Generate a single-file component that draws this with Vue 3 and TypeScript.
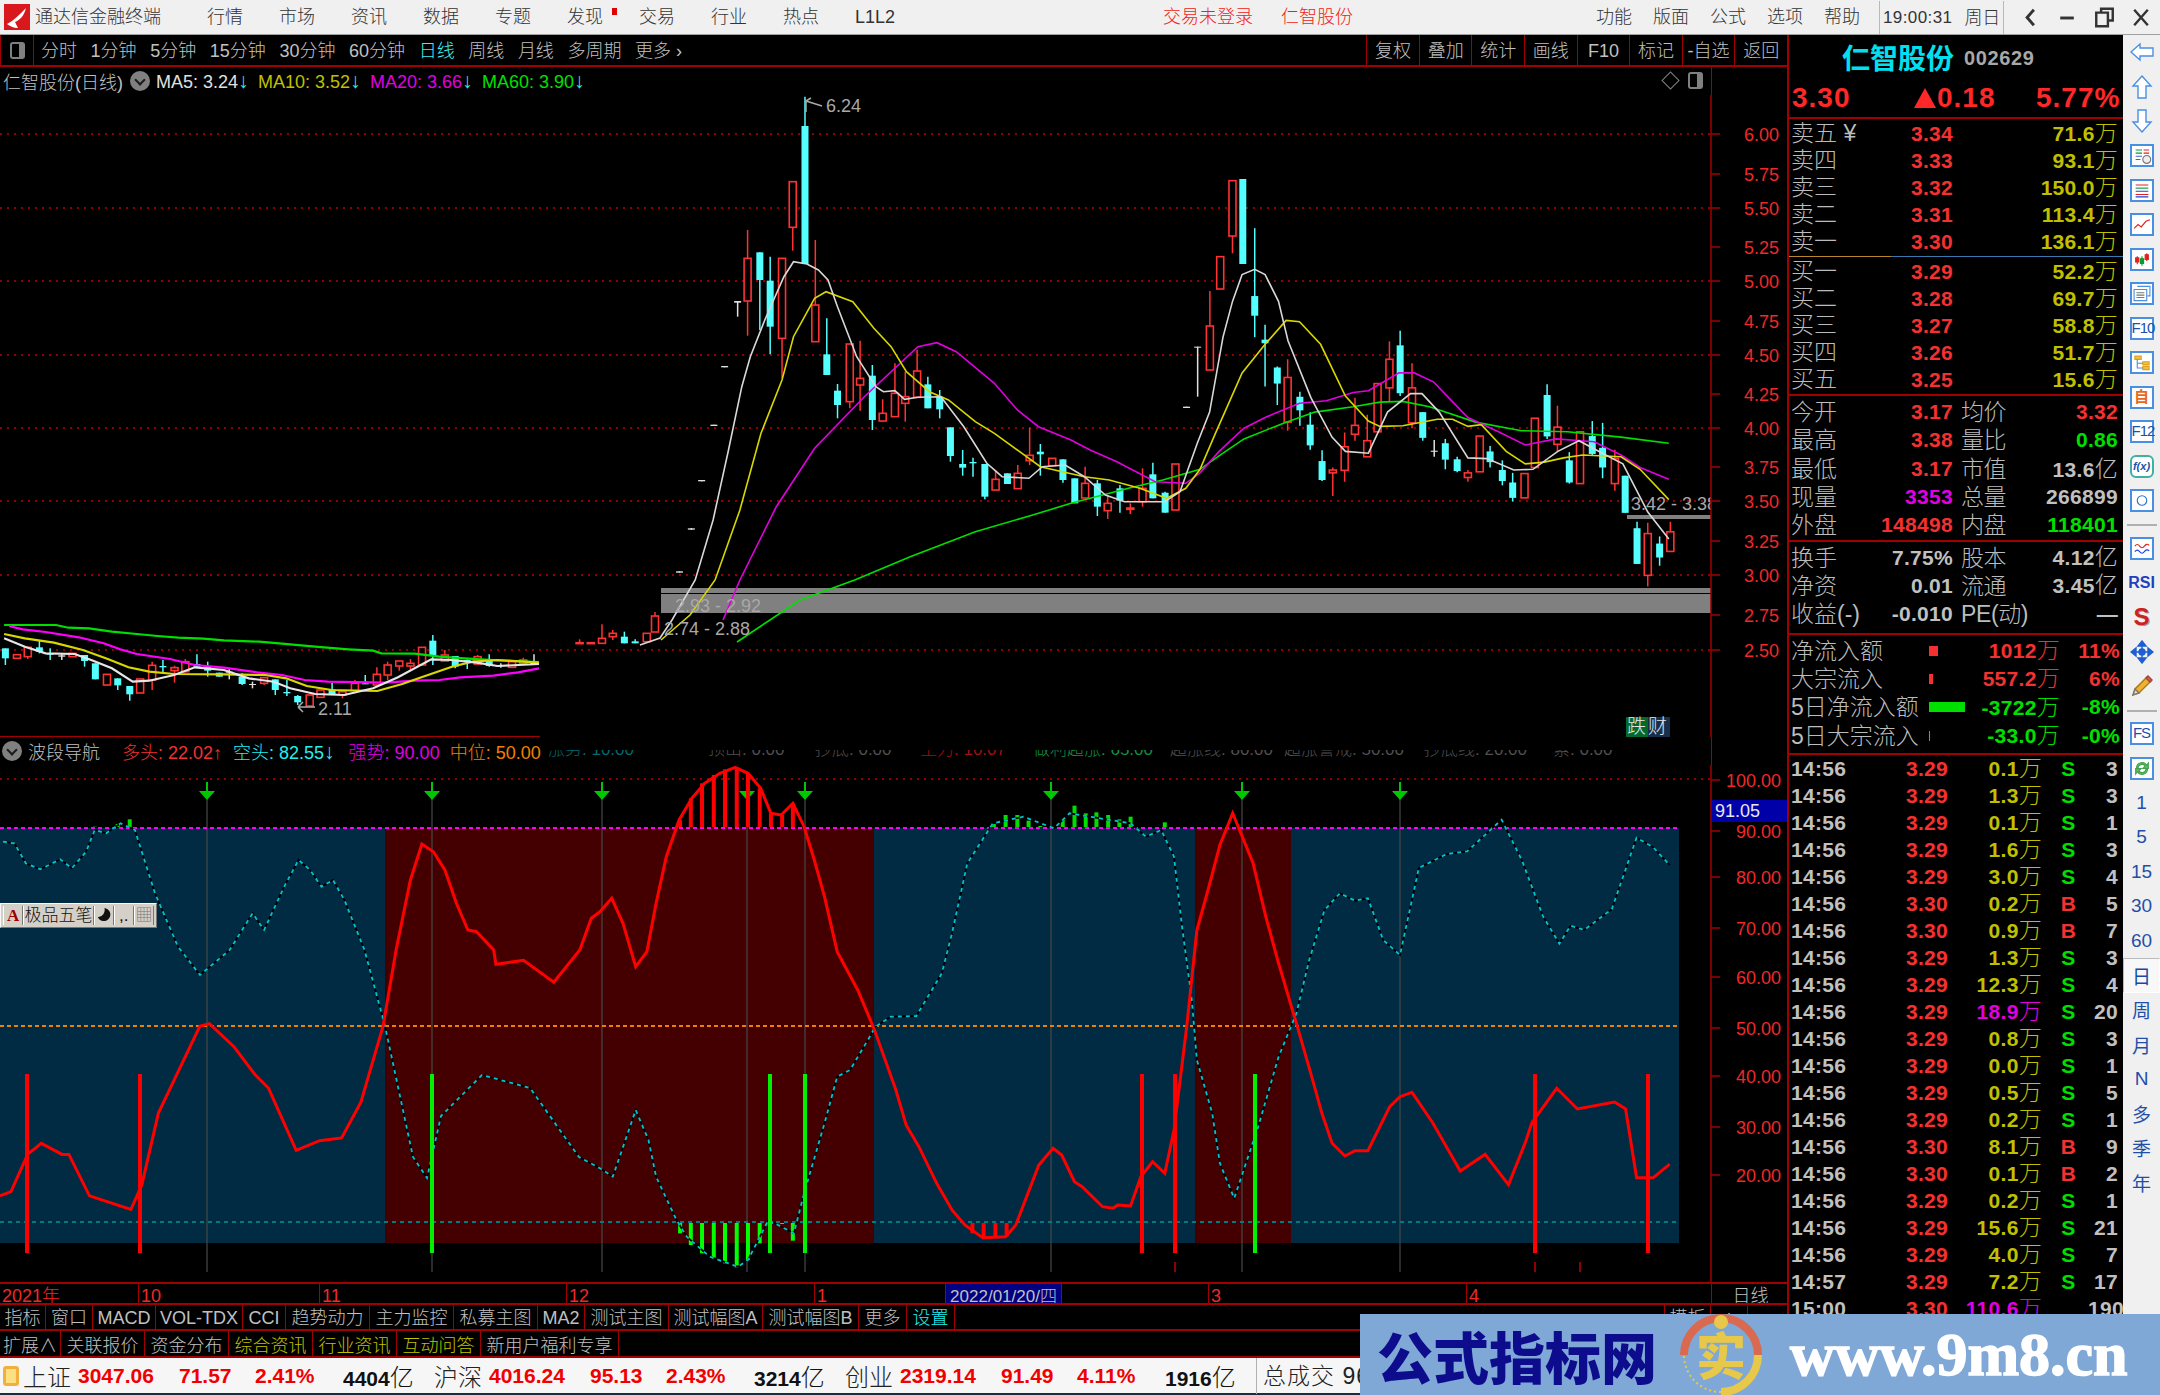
<template>
  <div class="app">
    <!-- title bar -->
    <header class="titlebar">
      <div class="title-left">
        <svg class="logo" viewBox="0 0 26 26">
          <rect width="26" height="26" fill="#d8181c" />
          <path d="M3 20 C9 17 13 13 22 4 C20 12 16 16 11 18 L14 24 C9 24 6 22 3 20 Z" fill="#fff" />
        </svg>
        <span class="brand">通达信金融终端</span>
        <nav class="menu">
          <span v-for="m in menus" :key="m" :class="{ flagged: m === '发现' }">{{ m }}</span>
        </nav>
      </div>
      <div class="title-center">
        <span>交易未登录</span>
        <span>仁智股份</span>
      </div>
      <div class="title-right">
        <span v-for="m in rightMenus" :key="m" class="rm">{{ m }}</span>
        <div class="clock">
          <span class="clock-time">19:00:31</span>
          <span class="clock-day">周日</span>
        </div>
        <div class="win-ctl">
          <svg viewBox="0 0 37 34">
            <path d="M22 9 L15 17 L22 25" fill="none" stroke="#333" stroke-width="3" />
          </svg>
          <svg viewBox="0 0 37 34"><rect x="11" y="16" width="14" height="3" fill="#333" /></svg>
          <svg viewBox="0 0 37 34">
            <path d="M15 12 V8 H27 V20 H23 M10 12 H22 V26 H10 Z" fill="none" stroke="#333" stroke-width="2.5" />
          </svg>
          <svg viewBox="0 0 37 34">
            <path d="M11 9 L25 25 M25 9 L11 25" fill="none" stroke="#333" stroke-width="2.5" />
          </svg>
        </div>
      </div>
    </header>

    <div class="main">
      <div class="left">
        <!-- period toolbar -->
        <div class="toolbar">
          <div class="tool-toggle"><i class="toggle"></i></div>
          <div class="periods">
            <span v-for="p in periods" :key="p" :class="{ on: p === '日线' }">{{ p }}</span>
          </div>
          <div class="tool-right">
            <span v-for="b in toolButtons" :key="b">{{ b }}</span>
          </div>
        </div>

        <!-- price panel -->
        <div class="legend">
          <div class="legend-main">
            <span class="stock">仁智股份(日线)</span>
            <i class="drop"></i>
            <span v-for="m in maLegend" :key="m.label" class="ma" :class="m.cls">
              {{ m.label }}<b class="down">↓</b>
            </span>
            <span class="legend-end">
              <i class="diamond"></i>
              <i class="toggle"></i>
            </span>
          </div>
        </div>
        <svg class="price-chart" viewBox="0 95 1787 642" width="1787" height="642">
          <defs>
            <clipPath id="plot"><rect x="0" y="95" width="1711" height="642" /></clipPath>
          </defs>
          <line v-for="y in priceGrid" :key="y" x1="0" :y1="y" x2="1711" :y2="y" class="grid" />
          <rect x="661" y="588" width="1050" height="5" fill="#808080" />
          <rect x="661" y="594" width="1050" height="19" fill="#808080" />
          <rect x="1627" y="515" width="84" height="4" fill="#808080" />
          <g v-for="(c, i) in candles" :key="i">
            <line :x1="c.x" :y1="c.wt" :x2="c.x" :y2="c.wb" :stroke="candleColor[c.kind]" stroke-width="1.5" />
            <rect
              :x="c.x - 3.5"
              :y="c.bt"
              width="7"
              :height="Math.max(c.bb - c.bt, 1)"
              :fill="c.kind === 0 ? '#000' : candleColor[c.kind]"
              :stroke="c.kind === 0 ? candleColor[0] : 'none'"
              :stroke-width="c.kind === 0 ? 1.6 : 0"
            />
          </g>
          <polyline v-for="l in maLines" :key="l.color + l.w" :points="l.pts" :stroke="l.color" :stroke-width="l.w" fill="none" />
          <g clip-path="url(#plot)" class="chart-note">
            <text x="1631" y="510">3.42 - 3.38</text>
            <text x="675" y="612">2.93 - 2.92</text>
            <text x="664" y="635">2.74 - 2.88</text>
          </g>
          <path d="M806 112 V101 M806 101 L822 106 M806 101 L811 98" stroke="#aaa" fill="none" stroke-width="1.5" />
          <text x="826" y="112" class="chart-note">6.24</text>
          <path d="M298 707 H315 M298 707 L303 702 M298 707 L303 712" stroke="#aaa" fill="none" stroke-width="1.5" />
          <text x="318" y="715" class="chart-note">2.11</text>
          <line x1="0" y1="737" x2="540" y2="737" stroke="#a00000" stroke-width="2" />
          <line x1="1711" y1="95" x2="1711" y2="737" class="axis" />
          <g v-for="t in priceTicks" :key="t.label">
            <line x1="1711" :y1="t.y" x2="1720" :y2="t.y" class="axis" />
            <text x="1779" :y="t.y + 7" class="axis-label">{{ t.label }}</text>
          </g>
          <rect x="1626" y="717" width="22" height="20" fill="#046a2c" />
          <rect x="1648" y="717" width="22" height="20" fill="#15304c" />
          <text x="1627" y="733" class="tag">跌财</text>
        </svg>

        <!-- indicator panel -->
        <div class="legend">
          <div class="legend-main">
            <i class="drop first"></i>
            <span class="stock">波段导航</span>
            <span class="ind red">多头: 22.02<b>↑</b></span>
            <span class="ind cyan">空头: 82.55<b class="down">↓</b></span>
            <span class="ind magenta">强势: 90.00</span>
            <span class="ind orange">中位: 50.00</span>
            <!-- these values are half cut by the panel edge in the terminal too -->
            <div class="ghosts">
              <span v-for="g in ghostItems" :key="g.t" :class="g.cls" :style="{ width: g.w + 'px' }">{{ g.t }}</span>
            </div>
          </div>
        </div>
        <div class="ind-wrap">
          <svg class="ind-chart" viewBox="0 765 1787 517" width="1787" height="517">
            <rect x="0" y="828" width="1679" height="415" fill="#002b42" />
            <rect x="385" y="828" width="489" height="415" fill="#440000" />
            <rect x="1195" y="828" width="96" height="415" fill="#440000" />
            <line x1="0" y1="779" x2="1711" y2="779" class="grid" />
            <line v-for="x in signalX" :key="x" :x1="x" y1="782" :x2="x" y2="1272" stroke="#484848" stroke-width="1.2" />
            <polygon v-for="x in signalX" :key="'a' + x" :points="`${x - 1},782 ${x + 1},782 ${x + 1},791 ${x + 8},791 ${x},800 ${x - 8},791 ${x - 1},791`" fill="#00c800" />
            <line x1="0" y1="828" x2="1679" y2="828" stroke="#ff00ff" stroke-width="2" stroke-dasharray="4 3" />
            <line x1="0" y1="1026" x2="1679" y2="1026" stroke="#f08000" stroke-width="2" stroke-dasharray="4 3" />
            <line x1="0" y1="1222" x2="1679" y2="1222" stroke="#007c80" stroke-width="2" stroke-dasharray="4 4" />
            <line v-for="b in topRed" :key="'tr' + b.x" :x1="b.x" :y1="b.y" :x2="b.x" y2="827" stroke="#ff0000" stroke-width="4" />
            <line v-for="b in topGreen" :key="'tg' + b.x" :x1="b.x" :y1="b.y" :x2="b.x" y2="827" stroke="#00e000" stroke-width="4" />
            <line v-for="b in lowGreen" :key="'lg' + b.x" :x1="b.x" y1="1223" :x2="b.x" :y2="b.y" stroke="#00ff00" stroke-width="4" />
            <line v-for="b in lowRed" :key="'lr' + b.x" :x1="b.x" y1="1223" :x2="b.x" :y2="b.y" stroke="#ff0000" stroke-width="4" />
            <polyline :points="cyanLine" fill="none" stroke="#000" stroke-width="1.8" />
            <polyline :points="cyanLine" fill="none" stroke="#00c4d0" stroke-width="1.8" stroke-dasharray="4 4" />
            <polyline :points="redLine" fill="none" stroke="#ff0000" stroke-width="3" />
            <line v-for="x in redSticks" :key="'rs' + x" :x1="x" y1="1074" :x2="x" y2="1253" stroke="#ff0000" stroke-width="4" />
            <line v-for="x in greenSticks" :key="'gs' + x" :x1="x" y1="1074" :x2="x" y2="1253" stroke="#00f000" stroke-width="4" />
            <line v-for="x in [1175, 1535, 1580]" :key="'t' + x" :x1="x" y1="1262" :x2="x" y2="1272" stroke="#c00000" stroke-width="1.5" />
            <line x1="1711" y1="765" x2="1711" y2="1282" class="axis" />
            <g v-for="t in indTicks" :key="t.label">
              <line x1="1711" :y1="t.y" x2="1720" :y2="t.y" class="axis" />
              <text x="1781" :y="t.y + 7" class="axis-label">{{ t.label }}</text>
            </g>
            <rect x="1712" y="800" width="75" height="22" fill="#0000a8" />
            <text x="1715" y="817" class="tag-value">91.05</text>
          </svg>
          <!-- input method bar floats over the chart -->
          <div class="ime">
            <span class="ime-key ime-a">A</span>
            <span class="ime-key ime-name">极品五笔</span>
            <span class="ime-key">
              <svg viewBox="0 0 16 18" width="15" height="17"><path d="M9 2 A7 7 0 1 1 2 12 A8 8 0 0 0 9 2 Z" fill="#111" /></svg>
            </span>
            <span class="ime-key">,.</span>
            <span class="ime-key ime-kb">▦</span>
          </div>
        </div>

        <!-- time axis -->
        <div class="time-axis">
          <span v-for="t in timeAxis" :key="t" :class="{ cursor: t.includes('/'), label: t === '日线' }">{{ t }}</span>
        </div>

        <div class="btn-row first">
          <span v-for="b in buttonsA" :key="b.k || b.t" :class="b.cls" :style="{ width: b.w + 'px' }">{{ b.t }}</span>
        </div>
        <div class="btn-row second">
          <span v-for="b in buttonsB" :key="b.t" :class="b.cls" :style="{ width: b.w + 'px' }">{{ b.t }}</span>
        </div>
      </div>

      <!-- quote panel -->
      <aside class="panel">
        <div class="name-row">
          <span class="name">仁智股份</span>
          <span class="code">002629</span>
        </div>
        <div class="price-row">
          <span>3.30</span>
          <span class="change"><b class="tri"></b>0.18</span>
          <span>5.77%</span>
        </div>
        <div class="book">
          <div v-for="r in sells" :key="r.l" class="book-row">
            <span class="lbl">{{ r.l }}</span>
            <span class="num px">{{ r.p }}</span>
            <span class="num vol">{{ r.v }}<em>万</em></span>
          </div>
        </div>
        <div class="book-split"></div>
        <div class="book">
          <div v-for="r in buys" :key="r.l" class="book-row">
            <span class="lbl">{{ r.l }}</span>
            <span class="num px">{{ r.p }}</span>
            <span class="num vol">{{ r.v }}<em>万</em></span>
          </div>
        </div>
        <div class="stats first">
          <div v-for="r in statsA" :key="r.a" class="stat-row">
            <span class="lbl">{{ r.a }}</span>
            <span class="num" :class="r.ac">{{ r.av }}</span>
            <span class="lbl">{{ r.b }}</span>
            <span class="num" :class="r.bc">{{ r.bv }}<em v-if="r.unit">{{ r.unit }}</em></span>
          </div>
        </div>
        <div class="stats second">
          <div v-for="r in statsB" :key="r.a" class="stat-row">
            <span class="lbl nowrap">{{ r.a }}</span>
            <span class="num gray">{{ r.av }}</span>
            <span class="lbl nowrap">{{ r.b }}</span>
            <span class="num gray">{{ r.bv }}<em v-if="r.unit">{{ r.unit }}</em></span>
          </div>
        </div>
        <div class="flows">
          <div v-for="f in flows" :key="f.l" class="flow-row" :class="f.cls">
            <span class="lbl nowrap">{{ f.l }}</span>
            <span class="flow-bar"><i :style="{ width: f.w + 'px' }"></i></span>
            <span class="num">{{ f.v }}<em>万</em></span>
            <span class="num">{{ f.p }}</span>
          </div>
        </div>
        <div class="ticks">
          <div v-for="(t, i) in ticks" :key="i" class="tick-row">
            <span class="num gray">{{ t[0] }}</span>
            <span class="num red">{{ t[1] }}</span>
            <span class="num" :class="t[5] ? 'magenta' : 'yellow'">{{ t[2] }}<em>万</em></span>
            <span class="num side" :class="t[3] === 'B' ? 'red' : 'green'">{{ t[3] }}</span>
            <span class="num gray">{{ t[4] }}</span>
          </div>
        </div>
      </aside>

      <!-- icon strip -->
      <aside class="sidebar">
        <template v-for="(s, i) in sideItems" :key="i">
          <div v-if="s.sep" class="side-sep"></div>
          <div v-else class="side-item" :class="s.cls">
            <svg v-if="s.shapes" viewBox="0 0 24 24" width="24" height="24">
              <path v-for="(p, j) in s.shapes" :key="j" :d="p[0]" :fill="p[1]" :stroke="p[2]" stroke-width="1.4" />
            </svg>
            <span v-else>{{ s.label }}</span>
          </div>
        </template>
      </aside>
    </div>

    <!-- index ticker -->
    <footer class="ticker">
      <i class="ticker-icon"></i>
      <div v-for="g in indices" :key="g.name" class="index">
        <span class="idx-name">{{ g.name }}</span>
        <span class="idx-num">{{ g.last }}</span>
        <span class="idx-num">{{ g.chg }}</span>
        <span class="idx-num">{{ g.pct }}</span>
        <span class="idx-amt">{{ g.amt }}<em>亿</em></span>
      </div>
      <span class="idx-total">总成交 9661亿</span>
    </footer>

    <!-- site watermark sits over the bottom right corner -->
    <div class="watermark">
      <span class="wm-cn">公式指标网</span>
      <svg class="wm-logo" viewBox="0 0 84 84" width="84" height="84">
        <path d="M5 42 A37 37 0 0 1 79 42" fill="none" stroke="#d9694f" stroke-width="8" />
        <path d="M79 42 A37 37 0 0 1 42 79" fill="none" stroke="#e8c84a" stroke-width="8" />
        <path d="M42 79 A37 37 0 0 1 5 42" fill="none" stroke="#e8c84a" stroke-width="2" stroke-dasharray="2 3" />
        <circle cx="42" cy="9" r="7" fill="#e8c84a" />
        <text x="42" y="62" text-anchor="middle" class="wm-mark">实</text>
      </svg>
      <span class="wm-url">www.9m8.cn</span>
    </div>
  </div>
</template>

<script setup lang="ts">
type Pair = [number, number];
type Raw = [number, number, number, number, number, number];

// reference crops were traced at different scales, these put them back on page pixels
const z8 = (p: Pair): Pair => [p[0] / 1.742, 730 + p[1] / 3];
const z9 = (p: Pair): Pair => [650 + p[0] / 2.613, 80 + p[1] / 3];
const z10 = (p: Pair): Pair => [1200 + p[0] / 2.613, 80 + p[1] / 2.8];
const z11 = (p: Pair): Pair => [p[0] / 2.412, 560 + p[1] / 3];
const z12 = (p: Pair): Pair => [600 + p[0] / 1.96, 760 + p[1] / 3];
const ov = (p: Pair): Pair => [p[0] * 1.3776, p[1] * 1.3776];
const toPts = (list: Pair[]) => list.map((p) => `${p[0].toFixed(1)},${p[1].toFixed(1)}`).join(" ");

const menus = ["行情", "市场", "资讯", "数据", "专题", "发现", "交易", "行业", "热点", "L1L2"];
const rightMenus = ["功能", "版面", "公式", "选项", "帮助"];
const periods = ["分时", "1分钟", "5分钟", "15分钟", "30分钟", "60分钟", "日线", "周线", "月线", "多周期", "更多 ›"];
const toolButtons = ["复权", "叠加", "统计", "画线", "F10", "标记", "-自选", "返回"];
const maLegend = [
  { label: "MA5: 3.24", cls: "white short" },
  { label: "MA10: 3.52", cls: "yellow" },
  { label: "MA20: 3.66", cls: "magenta" },
  { label: "MA60: 3.90", cls: "green" },
];
const ghostItems = [
  { t: "涨势: 10.00", cls: "g-teal", w: 160 },
  { t: "顶山: 0.00", cls: "g-gray", w: 107 },
  { t: "抄底: 0.00", cls: "g-gray", w: 105 },
  { t: "主力: 10.07", cls: "g-red", w: 113 },
  { t: "做利超涨: 65.00", cls: "g-green", w: 137 },
  { t: "超涨线: 80.00", cls: "g-gray", w: 114 },
  { t: "超涨警戒: 50.00", cls: "g-gray", w: 140 },
  { t: "抄底线: 20.00", cls: "g-gray", w: 129 },
  { t: "紧: 0.00", cls: "g-gray", w: 70 },
];

const priceGrid = [134, 208, 281, 355, 428, 501, 575, 650];
const priceTicks = [
  { label: "6.00", y: 134 },
  { label: "5.75", y: 174 },
  { label: "5.50", y: 208 },
  { label: "5.25", y: 247 },
  { label: "5.00", y: 281 },
  { label: "4.75", y: 321 },
  { label: "4.50", y: 355 },
  { label: "4.25", y: 394 },
  { label: "4.00", y: 428 },
  { label: "3.75", y: 467 },
  { label: "3.50", y: 501 },
  { label: "3.25", y: 541 },
  { label: "3.00", y: 575 },
  { label: "2.75", y: 615 },
  { label: "2.50", y: 650 },
];
const indTicks = [
  { label: "100.00", y: 780 },
  { label: "90.00", y: 831 },
  { label: "80.00", y: 877 },
  { label: "70.00", y: 928 },
  { label: "60.00", y: 977 },
  { label: "50.00", y: 1028 },
  { label: "40.00", y: 1076 },
  { label: "30.00", y: 1127 },
  { label: "20.00", y: 1175 },
];

const candleColor = ["#ff3232", "#54ffff", "#e0e0e0"];

// x, wick top, body top, body bottom, wick bottom, kind (0 up, 1 down, 2 doji)
const leftRaw: Raw[] = [
  [13, 265, 265, 295, 315, 1], [41, 284, 284, 295, 295, 0], [67, 262, 262, 290, 297, 0], [95, 240, 262, 275, 280, 1],
  [121, 265, 280, 284, 300, 1], [149, 280, 286, 290, 300, 2], [175, 280, 280, 290, 290, 0], [204, 285, 285, 303, 320, 1],
  [230, 310, 310, 358, 358, 1], [258, 343, 343, 375, 375, 0], [284, 355, 355, 376, 390, 1], [313, 378, 378, 403, 422, 1],
  [338, 357, 357, 399, 399, 0], [367, 305, 316, 360, 390, 0], [393, 300, 318, 322, 338, 1], [421, 317, 323, 332, 368, 0],
  [447, 297, 305, 335, 338, 0], [475, 283, 312, 320, 320, 1], [501, 305, 320, 332, 350, 1], [529, 338, 338, 350, 350, 1],
  [553, 325, 335, 338, 358, 2], [584, 340, 350, 372, 375, 1], [609, 365, 372, 375, 385, 2], [637, 350, 353, 370, 375, 0],
  [664, 358, 358, 390, 405, 1], [692, 360, 396, 400, 408, 1], [718, 405, 408, 427, 435, 1], [747, 405, 405, 438, 438, 0],
  [773, 390, 390, 412, 412, 0], [801, 368, 388, 405, 405, 1], [826, 395, 395, 405, 415, 0], [856, 360, 370, 392, 392, 0],
  [881, 345, 370, 372, 372, 1], [909, 322, 343, 375, 375, 0], [935, 305, 315, 345, 360, 0], [963, 303, 303, 318, 332, 0],
  [990, 297, 310, 318, 330, 0], [1018, 262, 262, 315, 315, 0], [1044, 225, 242, 285, 315, 1], [1073, 270, 285, 303, 303, 0],
  [1098, 288, 288, 320, 325, 1], [1127, 298, 300, 302, 327, 1], [1152, 285, 290, 312, 315, 0], [1180, 283, 303, 318, 320, 1],
  [1208, 310, 315, 317, 323, 2], [1235, 305, 305, 322, 322, 0], [1262, 293, 300, 310, 310, 0], [1288, 283, 305, 315, 315, 2],
  [1398, 238, 248, 250, 250, 0], [1425, 248, 248, 250, 250, 0], [1452, 193, 235, 250, 250, 0], [1478, 210, 220, 230, 240, 0],
  [1506, 215, 230, 250, 250, 1], [1532, 238, 244, 250, 250, 1], [1560, 220, 220, 245, 245, 0],
];
const midRaw: Raw[] = [
  [77, 1474, 1474, 1478, 1478, 2], [108, 1344, 1345, 1349, 1349, 2], [135, 1200, 1200, 1204, 1204, 2], [167, 1034, 1034, 1038, 1038, 2],
  [195, 858, 858, 862, 862, 2], [229, 663, 663, 668, 710, 2],
  [255, 450, 535, 663, 767, 0], [287, 517, 517, 600, 750, 1], [314, 530, 602, 740, 823, 1], [345, 535, 535, 775, 895, 0],
  [373, 305, 305, 442, 512, 0], [405, 50, 138, 552, 552, 1], [432, 480, 675, 785, 785, 0], [462, 715, 823, 885, 885, 1],
  [490, 912, 932, 975, 1015, 1], [522, 792, 792, 965, 985, 0], [549, 782, 895, 915, 992, 0], [581, 855, 887, 1020, 1050, 1],
  [608, 958, 1000, 1023, 1023, 0], [640, 850, 940, 1010, 1010, 0], [667, 875, 950, 970, 1025, 0], [698, 810, 873, 952, 952, 0],
  [726, 890, 913, 985, 985, 1], [757, 930, 950, 988, 1015, 1], [785, 1042, 1042, 1128, 1145, 1], [817, 1110, 1152, 1163, 1187, 1],
  [844, 1133, 1146, 1150, 1190, 1], [875, 1152, 1152, 1250, 1258, 1], [903, 1170, 1198, 1230, 1230, 0], [934, 1180, 1180, 1212, 1212, 1],
  [961, 1155, 1180, 1226, 1226, 0], [992, 1043, 1126, 1142, 1155, 0], [1020, 1092, 1115, 1123, 1187, 1], [1051, 1135, 1135, 1157, 1157, 0],
  [1079, 1138, 1138, 1200, 1208, 1], [1110, 1195, 1195, 1270, 1270, 1], [1137, 1160, 1210, 1254, 1254, 0], [1169, 1200, 1210, 1280, 1308, 1],
  [1196, 1245, 1270, 1292, 1317, 0], [1228, 1215, 1225, 1262, 1298, 1], [1255, 1270, 1284, 1288, 1302, 0], [1287, 1165, 1225, 1265, 1280, 0],
  [1314, 1148, 1183, 1255, 1255, 1], [1346, 1235, 1238, 1298, 1298, 1], [1373, 1152, 1152, 1290, 1290, 0], [1402, 980, 980, 984, 984, 2],
  [1431, 800, 800, 803, 950, 2], [1463, 633, 738, 870, 870, 0], [1490, 530, 530, 627, 627, 0], [1522, 302, 302, 468, 520, 0],
  [1549, 297, 297, 552, 552, 1],
];
const rightRaw: Raw[] = [
  [143, 415, 605, 660, 720, 1], [170, 685, 727, 737, 858, 1], [202, 802, 805, 850, 910, 1], [229, 782, 833, 958, 982, 0],
  [261, 873, 887, 925, 968, 1], [288, 930, 965, 1023, 1035, 1], [319, 1037, 1067, 1120, 1123, 1], [347, 1085, 1092, 1100, 1165, 0],
  [378, 987, 1027, 1093, 1125, 0], [405, 890, 967, 992, 1010, 0], [437, 937, 1010, 1055, 1055, 0], [464, 850, 850, 985, 985, 0],
  [495, 732, 782, 862, 900, 0], [523, 702, 743, 877, 885, 1], [554, 793, 862, 960, 975, 0], [582, 930, 930, 1002, 1010, 1],
  [612, 1008, 1038, 1041, 1055, 2], [641, 1005, 1017, 1063, 1090, 1], [672, 1055, 1062, 1095, 1098, 1], [700, 1092, 1100, 1113, 1125, 0],
  [731, 997, 997, 1097, 1097, 0], [758, 1025, 1040, 1070, 1085, 1], [790, 1065, 1092, 1123, 1135, 1], [817, 1100, 1127, 1170, 1180, 1],
  [848, 1102, 1102, 1170, 1170, 0], [875, 947, 947, 1085, 1085, 0], [907, 852, 882, 998, 1005, 1], [934, 912, 972, 1020, 1040, 0],
  [965, 1042, 1065, 1127, 1130, 1], [993, 985, 985, 1130, 1130, 0], [1025, 955, 997, 1047, 1050, 1], [1052, 960, 1030, 1085, 1115, 1],
  [1084, 1035, 1060, 1130, 1150, 0], [1111, 1108, 1108, 1212, 1212, 1], [1142, 1237, 1255, 1355, 1355, 1], [1170, 1240, 1270, 1387, 1418, 0],
  [1201, 1278, 1298, 1337, 1360, 1], [1229, 1237, 1265, 1320, 1320, 0],
];

const toCandles = (raw: Raw[], map: (p: Pair) => Pair) =>
  raw.map((r) => ({
    x: map([r[0], 0])[0],
    wt: map([0, r[1]])[1],
    bt: map([0, r[2]])[1],
    bb: map([0, r[3]])[1],
    wb: map([0, r[4]])[1],
    kind: r[5],
  }));

const candles = [
  ...toCandles(leftRaw, z11),
  { x: 655, wt: 612, bt: 616, bb: 632, wb: 632, kind: 0 },
  ...toCandles(midRaw, z9),
  ...toCandles(rightRaw, z10),
];

const leftMa = {
  green: [[10,195],[135,195],[165,203],[215,205],[270,215],[330,222],[380,228],[430,233],[490,236],[540,241],[625,245],[680,251],[760,260],[840,268],[900,272],[920,280],[1000,281],[1060,290],[1120,295],[1200,301],[1300,306]] as Pair[],
  magenta: [[22,198],[55,208],[110,216],[190,232],[250,250],[290,268],[330,282],[410,297],[470,315],[540,323],[620,337],[680,345],[735,360],[790,365],[930,368],[1000,362],[1060,360],[1110,352],[1190,347],[1250,337],[1300,325]] as Pair[],
  yellow: [[10,222],[60,235],[130,248],[200,270],[260,297],[310,322],[360,335],[420,342],[540,343],[640,345],[690,355],[740,378],[800,390],[910,393],[970,372],[1020,350],[1090,320],[1140,305],[1200,300],[1300,308]] as Pair[],
  white: [[10,235],[60,260],[110,280],[180,282],[220,300],[270,325],[320,365],[360,362],[420,345],[470,322],[540,330],[600,355],[660,365],[700,385],[760,402],[830,405],[900,385],[960,352],[1040,298],[1090,300],[1150,308],[1200,318],[1300,312]] as Pair[],
};

const whiteLine: Pair[] = [
  [640, 645], [660, 638], [672, 620],
  ...([[118,1500],[165,1320],[205,1110],[240,920],[262,830],[300,720],[350,590],[375,545],[410,552],[440,570],[465,600],[490,680],[540,830],[590,920],[610,935],[640,932],[665,958],[700,952],[760,950],[820,1040],[880,1150],[920,1190],[990,1195],[1025,1160],[1085,1155],[1135,1190],[1190,1245],[1240,1265],[1345,1265],[1385,1235],[1430,1090]] as Pair[]).map(z9),
  ...([[25,930],[60,720],[85,620],[110,545],[143,530],[170,545],[205,620],[230,730],[290,890],[345,1000],[380,1040],[440,1045],[490,930],[550,878],[580,878],[625,930],[700,1058],[750,1060],[820,1092],[870,1090],[935,1040],[990,1010],[1060,1050],[1105,1075],[1170,1210],[1225,1285]] as Pair[]).map(z10),
];
const yellowLine: Pair[] = [
  [661, 640], [690, 615],
  ...([[170,1500],[235,1290],[290,1060],[345,900],[375,770],[430,655],[460,635],[530,665],[585,745],[630,800],[670,875],[730,935],[780,960],[850,1025],[900,1060],[1020,1160],[1135,1190],[1200,1200],[1280,1225],[1350,1255],[1400,1225]] as Pair[]).map(z9),
  ...([[0,1090],[40,990],[110,820],[170,740],[225,673],[260,677],[315,740],[380,885],[440,955],[470,970],[530,968],[620,950],[660,950],[700,970],[735,965],[800,1040],[850,1075],[900,1070],[950,1058],[1000,1050],[1100,1055],[1150,1090],[1225,1175]] as Pair[]).map(z10),
];
const magentaLine: Pair[] = [
  [723, 620],
  ...([[235,1500],[330,1280],[430,1105],[560,950],[700,800],[750,788],[800,815],[900,910],[960,990],[1015,1040],[1100,1080],[1150,1110],[1220,1145],[1320,1205],[1400,1210]] as Pair[]).map(z9),
  ...([[0,1100],[50,1040],[115,975],[170,945],[260,905],[330,898],[400,875],[440,870],[520,820],[560,820],[610,845],[650,890],[700,945],[780,985],[850,1022],[930,1005],[1030,1013],[1100,1050],[1150,1085],[1225,1118]] as Pair[]).map(z10),
];
const greenLine: Pair[] = [
  [737, 642], [800, 600],
  ...([[535,1500],[680,1430],[850,1355],[1000,1305],[1100,1270],[1250,1225],[1340,1200]] as Pair[]).map(z9),
  ...([[0,1090],[60,1045],[115,1005],[220,960],[300,930],[400,915],[470,902],[530,900],[600,915],[720,958],[840,982],[960,985],[1100,1000],[1225,1017]] as Pair[]).map(z10),
];

const maLines = [
  { color: "#00e000", w: 2.2, pts: toPts(leftMa.green.map(z11)) },
  { color: "#ff00ff", w: 2.2, pts: toPts(leftMa.magenta.map(z11)) },
  { color: "#d8d800", w: 2.2, pts: toPts(leftMa.yellow.map(z11)) },
  { color: "#e6e6e6", w: 2.2, pts: toPts(leftMa.white.map(z11)) },
  { color: "#00e000", w: 1.6, pts: toPts(greenLine) },
  { color: "#e000e0", w: 1.6, pts: toPts(magentaLine) },
  { color: "#d8d800", w: 1.6, pts: toPts(yellowLine) },
  { color: "#d8d8d8", w: 1.6, pts: toPts(whiteLine) },
];

const signalX = [207, 432, 602, 747, 805, 1051, 1242, 1400];
const redSticks = [27, 140, 1142, 1175, 1535, 1648];
const greenSticks = [432, 770, 805, 1255];

const barsZ12 = (list: Pair[]) => list.map((b) => ({ x: z12(b)[0], y: z12(b)[1] }));
const topRed = barsZ12([[157,180],[178,115],[200,70],[223,45],[245,28],[268,22],[290,40],[313,85],[335,160],[357,165],[378,130]]);
const topGreen = [
  ...barsZ12([[772,190],[795,165],[818,165],[840,182],[863,198],[907,180],[930,137],[952,160],[973,157],[996,165],[1018,178],[1040,170],[1107,187]]),
  ...([[165,290],[205,282],[226,268]] as Pair[]).map(z8).map((p) => ({ x: p[0], y: p[1] })),
];
const lowGreen = barsZ12([[157,1420],[178,1455],[200,1480],[223,1495],[245,1510],[268,1522],[290,1500],[313,1450],[335,1392],[357,1392],[378,1442]]);
const lowRed = barsZ12([[730,1420],[752,1433],[775,1433],[797,1430]]);

const redLine = toPts([
  ...([[0,868],[8,865],[20,838],[30,830],[45,838],[50,838],[65,868],[95,878],[103,860],[115,808],[125,787],[145,745],[152,743],[170,760],[185,780],[195,790],[215,835],[232,828],[248,826],[262,800],[278,745]] as Pair[]).map(ov),
  ...([[690,660],[715,450],[735,342],[755,365],[775,420],[795,520],[815,600],[830,605],[860,660]] as Pair[]).map(z8),
  ...([[360,700],[380,697],[402,713]] as Pair[]).map(ov),
  ...([[1010,660],[1030,565]] as Pair[]).map(z8),
  ...([[0,455],[23,415],[45,490],[70,620],[92,575],[110,430],[130,290],[155,180],[180,115],[205,70],[235,40],[265,22],[290,40],[315,85],[335,160],[355,165],[378,130],[400,200],[420,300],[440,410],[465,575],[505,690],[538,810],[580,990],[600,1095],[625,1160],[660,1270],[690,1350],[715,1395],[750,1433],[795,1430],[815,1395],[860,1215],[888,1165],[905,1185],[930,1265],[945,1280],[985,1340],[1005,1345],[1015,1335],[1040,1338],[1060,1250],[1083,1205],[1107,1240],[1125,1110],[1150,800],[1170,510],[1190,400],[1215,255],[1240,160],[1280,310],[1305,470],[1330,610],[1365,790],[1395,950],[1415,1060],[1435,1150],[1460,1188],[1480,1172],[1505,1172],[1548,1040],[1568,1010]] as Pair[]).map(z12),
  ...([[1025,793],[1040,815],[1060,850],[1078,838],[1095,860],[1107,830],[1112,815],[1130,790],[1145,805],[1172,800],[1180,805],[1188,855],[1200,855],[1212,845]] as Pair[]).map(ov),
]);

const cyanLine = toPts([
  ...([[5,335],[25,340],[45,400],[70,418],[105,388],[125,415],[150,365],[165,300],[185,310],[210,280],[235,300],[270,490],[310,650]] as Pair[]).map(z8),
  [200, 975] as Pair,
  ...([[400,660],[440,550],[460,600],[495,470],[520,390],[540,420],[560,470],[580,450],[600,510],[635,660]] as Pair[]).map(z8),
  [385, 1026], [413, 1157], [427, 1178], [441, 1116], [482, 1075], [530, 1088], [579, 1157],
  ...([[0,1225],[25,1250],[70,1050],[95,1140],[110,1250],[150,1380],[170,1430],[215,1490],[270,1520],[290,1500],[330,1380],[380,1420],[400,1300],[440,1090],[465,950],[490,930],[525,840],[540,800],[570,770],[620,768],[670,640],[690,520],[720,310],[770,190],[830,170],[890,205],[920,160],[1040,190],[1070,230],[1100,210],[1125,290],[1140,490],[1160,720],[1170,900],[1200,1060],[1215,1210],[1243,1315],[1290,1100],[1330,890],[1365,760],[1390,600],[1420,450],[1450,400],[1480,422],[1505,415],[1535,540],[1568,585]] as Pair[]).map(z12),
  ...([[1030,630],[1050,620],[1065,618],[1090,595],[1105,625],[1120,665],[1132,685],[1140,672],[1150,675],[1170,660],[1188,608],[1200,615],[1212,628]] as Pair[]).map(ov),
] as Pair[]);

const timeAxis = ["2021年", "10", "11", "12", "1", "2022/01/20/四", "", "3", "4", "日线"];

interface Btn {
  t: string;
  w: number;
  cls?: string;
  k?: string;
}
const buttonsA: Btn[] = [
  { t: "指标", w: 46 }, { t: "窗口", w: 47 }, { t: "MACD", w: 63 }, { t: "VOL-TDX", w: 87 }, { t: "CCI", w: 43 },
  { t: "趋势动力", w: 84 }, { t: "主力监控", w: 84 }, { t: "私募主图", w: 84 }, { t: "MA2", w: 47 }, { t: "测试主图", w: 84 },
  { t: "测试幅图A", w: 94 }, { t: "测试幅图B", w: 96 }, { t: "更多", w: 48 }, { t: "设置", w: 48, cls: "cyan" },
  { t: "", w: 710, k: "gap" }, { t: "模板", w: 46 }, { t: "+", w: 37 },
];
const buttonsB: Btn[] = [
  { t: "扩展∧", w: 61 }, { t: "关联报价", w: 84 }, { t: "资金分布", w: 84 }, { t: "综合资讯", w: 84, cls: "yellow" },
  { t: "行业资讯", w: 84, cls: "yellow" }, { t: "互动问答", w: 84, cls: "yellow" }, { t: "新用户福利专享", w: 138 },
];

const sells = [
  { l: "卖五 ¥", p: "3.34", v: "71.6" },
  { l: "卖四", p: "3.33", v: "93.1" },
  { l: "卖三", p: "3.32", v: "150.0" },
  { l: "卖二", p: "3.31", v: "113.4" },
  { l: "卖一", p: "3.30", v: "136.1" },
];
const buys = [
  { l: "买一", p: "3.29", v: "52.2" },
  { l: "买二", p: "3.28", v: "69.7" },
  { l: "买三", p: "3.27", v: "58.8" },
  { l: "买四", p: "3.26", v: "51.7" },
  { l: "买五", p: "3.25", v: "15.6" },
];
const statsA = [
  { a: "今开", av: "3.17", ac: "red", b: "均价", bv: "3.32", bc: "red" },
  { a: "最高", av: "3.38", ac: "red", b: "量比", bv: "0.86", bc: "green" },
  { a: "最低", av: "3.17", ac: "red", b: "市值", bv: "13.6", bc: "gray", unit: "亿" },
  { a: "现量", av: "3353", ac: "magenta", b: "总量", bv: "266899", bc: "gray" },
  { a: "外盘", av: "148498", ac: "red", b: "内盘", bv: "118401", bc: "green" },
];
const statsB = [
  { a: "换手", av: "7.75%", b: "股本", bv: "4.12", unit: "亿" },
  { a: "净资", av: "0.01", b: "流通", bv: "3.45", unit: "亿" },
  { a: "收益(-)", av: "-0.010", b: "PE(动)", bv: "—" },
];
const flows = [
  { l: "净流入额", w: 9, v: "1012", p: "11%", cls: "up" },
  { l: "大宗流入", w: 4, v: "557.2", p: "6%", cls: "up" },
  { l: "5日净流入额", w: 36, v: "-3722", p: "-8%", cls: "dn" },
  { l: "5日大宗流入", w: 1, v: "-33.0", p: "-0%", cls: "dn" },
];

type Tick = [string, string, string, string, string, boolean?];
const ticks: Tick[] = [
  ["14:56", "3.29", "0.1", "S", "3"],
  ["14:56", "3.29", "1.3", "S", "3"],
  ["14:56", "3.29", "0.1", "S", "1"],
  ["14:56", "3.29", "1.6", "S", "3"],
  ["14:56", "3.29", "3.0", "S", "4"],
  ["14:56", "3.30", "0.2", "B", "5"],
  ["14:56", "3.30", "0.9", "B", "7"],
  ["14:56", "3.29", "1.3", "S", "3"],
  ["14:56", "3.29", "12.3", "S", "4"],
  ["14:56", "3.29", "18.9", "S", "20", true],
  ["14:56", "3.29", "0.8", "S", "3"],
  ["14:56", "3.29", "0.0", "S", "1"],
  ["14:56", "3.29", "0.5", "S", "5"],
  ["14:56", "3.29", "0.2", "S", "1"],
  ["14:56", "3.30", "8.1", "B", "9"],
  ["14:56", "3.30", "0.1", "B", "2"],
  ["14:56", "3.29", "0.2", "S", "1"],
  ["14:56", "3.29", "15.6", "S", "21"],
  ["14:56", "3.29", "4.0", "S", "7"],
  ["14:57", "3.29", "7.2", "S", "17"],
  ["15:00", "3.30", "110.6", "", "190", true],
];

const BLUE = "#4a90e2";
interface SideItem {
  sep?: boolean;
  cls?: string;
  label?: string;
  shapes?: [string, string, string][];
}
const sideItems: SideItem[] = [
  { shapes: [["M1 12 L10 4 V8 H23 V16 H10 V20 Z", "#fff", BLUE]] },
  { shapes: [["M12 1 L21 11 H16 V23 H8 V11 H3 Z", "#fff", BLUE]] },
  { shapes: [["M12 23 L21 13 H16 V1 H8 V13 H3 Z", "#fff", BLUE]] },
  { cls: "framed", shapes: [["M4 5 H12 M4 9 H12", "none", "#0a9a30"], ["M14 5 H21 M14 9 H21", "none", "#e02020"], ["M4 13 H12 M4 17 H10", "none", "#4060d0"], ["M18 17 m-5 0 a5 5 0 1 0 10 0 a5 5 0 1 0 -10 0", "#eee", "#777"]] },
  { cls: "framed", shapes: [["M4 5 H20 M4 17 H20", "none", "#e02020"], ["M4 9 H20", "none", "#0a9a30"], ["M4 13 H20 M4 20 H20", "none", "#2040e0"]] },
  { cls: "framed", shapes: [["M2 17 L7 12 L11 15 L17 8 L22 6", "none", "#e02020"]] },
  { cls: "framed", shapes: [["M6 8 V18 M18 4 V14", "none", "#e02020"], ["M12 8 V20", "none", "#0a9a30"], ["M4 10 H8 V15 H4 Z M16 6 H20 V12 H16 Z", "#e02020", "#e02020"], ["M10 11 H14 V17 H10 Z", "#0a9a30", "#0a9a30"]] },
  { cls: "framed", shapes: [["M6 3 H22 V15 H19 M2 7 H18 V21 H2 Z", "#fff", BLUE], ["M5 11 H15 M5 14 H15 M5 17 H15", "none", "#777"]] },
  { cls: "framed txt", label: "F10" },
  { cls: "framed", shapes: [["M3 4 H11 V8 H3 Z M13 11 H21 V15 H13 Z M13 17 H21 V21 H13 Z", "#f0c040", "#e0a020"], ["M6 8 V19 H13 M6 13 H13", "none", BLUE]] },
  { cls: "framed icon-auto", label: "自" },
  { cls: "framed txt", label: "F12" },
  { cls: "framed fx", label: "f(x)" },
  { cls: "framed", shapes: [["M12 12 m-6 0 a6 6 0 1 0 12 0 a6 6 0 1 0 -12 0", "none", "#2a70c8"]] },
  { sep: true },
  { cls: "framed", shapes: [["M3 9 Q6 5 9 9 T15 9 T21 8", "none", "#e02020"], ["M3 16 Q6 12 9 16 T15 16 T21 15", "none", "#2040e0"]] },
  { cls: "rsi", label: "RSI" },
  { cls: "dollar", label: "S" },
  { shapes: [["M12 1 L16 6 H8 Z M12 23 L16 18 H8 Z M1 12 L6 8 V16 Z M23 12 L18 8 V16 Z", "#1f5fd0", "#1f5fd0"], ["M12 5 V19 M5 12 H19", "none", "#1f5fd0"], ["M9 12 a3 3 0 1 0 6 0 a3 3 0 1 0 -6 0", "#1f5fd0", "#1f5fd0"]] },
  { shapes: [["M3 21 L5 15 L17 3 L21 7 L9 19 Z", "#f0b030", "#a87818"], ["M16 4 L20 8 L22 6 L18 2 Z", "#e06060", "#a04040"], ["M3 21 L5 15 L9 19 Z", "#f0d8b0", "#777"]] },
  { sep: true },
  { cls: "framed txt", label: "FS" },
  { cls: "framed", shapes: [["M5 11 A7 7 0 0 1 18 8 L20 5 V12 H13 L16 9 A5 5 0 0 0 7 11 Z", "#55c060", "#45a050"], ["M19 13 A7 7 0 0 1 6 16 L4 19 V12 H11 L8 15 A5 5 0 0 0 17 13 Z", "#55c060", "#45a050"]] },
  { label: "1" }, { label: "5" }, { label: "15" }, { label: "30" }, { label: "60" },
  { label: "日", cls: "picked" }, { label: "周" }, { label: "月" }, { label: "N" }, { label: "多" }, { label: "季" }, { label: "年" },
];

const indices = [
  { name: "上证", last: "3047.06", chg: "71.57", pct: "2.41%", amt: "4404" },
  { name: "沪深", last: "4016.24", chg: "95.13", pct: "2.43%", amt: "3214" },
  { name: "创业", last: "2319.14", chg: "91.49", pct: "4.11%", amt: "1916" },
];
</script>

<style>
html,
body {
  margin: 0;
  background: #000;
}
</style>

<style scoped>
.app {
  position: relative;
  width: 2160px;
  height: 1395px;
  overflow: hidden;
  background: #000;
  color: #c0c0c0;
  font-family: "Liberation Sans", "Noto Sans CJK SC", sans-serif;
  font-size: 18px;
  font-weight: 300;
}

/* 标题栏 */
.titlebar {
  display: flex;
  height: 34px;
  border-bottom: 1px solid #a0a0a0;
  background: #f0f0f0;
  color: #333;
  align-items: center;
  line-height: 34px;
  white-space: nowrap;
}
.title-left {
  display: flex;
  width: 1163px;
  flex: none;
  align-items: center;
}
.logo {
  width: 26px;
  height: 26px;
  margin-left: 4px;
  flex: none;
}
.brand {
  width: 177px;
  padding-left: 5px;
  box-sizing: border-box;
}
.menu {
  display: flex;
  gap: 36px;
}
.menu span {
  position: relative;
  min-width: 36px;
}
.flagged::after {
  content: "";
  position: absolute;
  left: 45px;
  top: 8px;
  width: 5px;
  height: 7px;
  background: #e00000;
}
.title-center {
  display: flex;
  width: 433px;
  flex: none;
  gap: 28px;
  color: #f02020;
}
.title-right {
  display: flex;
  flex: 1;
  align-items: center;
  gap: 21px;
}
.rm {
  width: 36px;
  flex: none;
}
.clock {
  display: flex;
  width: 125px;
  height: 33px;
  flex: none;
  box-sizing: border-box;
  margin-left: -2px;
  padding-left: 3px;
  gap: 12px;
  border-left: 1px solid #b8b8b8;
  border-right: 1px solid #b8b8b8;
}
.clock-time {
  flex: none;
  letter-spacing: 0.4px;
  font-size: 17px;
}
.clock-day {
  flex: none;
}
.win-ctl {
  display: flex;
  flex: none;
  margin-left: -13px;
}
.win-ctl svg {
  width: 37px;
  height: 33px;
}

.main {
  display: flex;
  height: 1323px;
}
.left {
  display: flex;
  width: 1787px;
  flex: none;
  flex-direction: column;
}

/* 周期工具条 */
.toolbar {
  display: flex;
  height: 32px;
  box-sizing: border-box;
  border-bottom: 2px solid #a00000;
  align-items: stretch;
  line-height: 33px;
}
.tool-toggle {
  display: flex;
  width: 34px;
  border-left: 1px solid #a00000;
  border-right: 1px solid #a00000;
  box-sizing: border-box;
  align-items: center;
  justify-content: center;
}
.toggle {
  display: block;
  box-sizing: border-box;
  width: 15px;
  height: 17px;
  border: 2px solid #808080;
  border-right-width: 6px;
  border-radius: 3px;
}
.periods {
  display: flex;
  gap: 13.6px;
  padding-left: 7px;
}
.periods .on {
  color: #40f0f0;
}
.tool-right {
  display: flex;
  margin-left: auto;
}
.tool-right span {
  width: 52.6px;
  box-sizing: border-box;
  border-left: 1px solid #a00000;
  text-align: center;
}

.legend {
  display: flex;
  height: 28px;
  flex: none;
}
.legend-main {
  position: relative;
  display: flex;
  width: 1712px;
  box-sizing: border-box;
  border-right: 1px solid #a00000;
  align-items: center;
  overflow: hidden;
  white-space: nowrap;
  padding-left: 3px;
}
.drop {
  position: relative;
  width: 20px;
  height: 20px;
  margin: 0 6px 0 7px;
  border-radius: 50%;
  background: #808080;
  flex: none;
}
.drop.first {
  margin: 0 6px 0 -1px;
}
.drop::after {
  content: "";
  position: absolute;
  left: 6px;
  top: 5px;
  width: 6px;
  height: 6px;
  border-right: 2px solid #1c1c1c;
  border-bottom: 2px solid #1c1c1c;
  transform: rotate(45deg);
}
.stock {
  flex: none;
}
.ma {
  width: 112px;
  flex: none;
}
.ma.short {
  width: 102px;
}
.down {
  color: #40e0f0;
  font-size: 21px;
  font-weight: 400;
}
.legend-end {
  display: flex;
  position: absolute;
  right: 8px;
  top: 5px;
  gap: 11px;
  align-items: center;
}
.diamond {
  display: block;
  width: 11px;
  height: 11px;
  border: 1px solid #808080;
  transform: rotate(45deg);
}
.ind {
  flex: none;
  margin-right: 11px;
}
.stock + .ind {
  margin-left: 22px;
}
.ind.cyan {
  margin-right: 14px;
}
.ind.magenta {
  margin-right: 10px;
}
.ghosts {
  display: flex;
  position: absolute;
  left: 548px;
  top: 13px;
  height: 8px;
  overflow: hidden;
  line-height: 0;
  font-size: 17px;
  align-items: flex-start;
}
.ghosts span {
  display: block;
  flex: none;
  line-height: 0;
}
.g-teal { color: #006a70; }
.g-gray { color: #505050; }
.g-red { color: #a01010; }
.g-green { color: #109040; }

.white { color: #e0e0e0; }
.red { color: #f53030; }
.cyan { color: #20f0f0; }
.magenta { color: #e000e0; }
.orange { color: #f08000; }
.yellow { color: #c0c000; }
.green { color: #00e000; }
.gray { color: #c0c0c0; }

.price-chart,
.ind-chart {
  display: block;
  flex: none;
}
.grid {
  stroke: #c00000;
  stroke-width: 1.5;
  stroke-dasharray: 2 5;
}
.axis {
  stroke: #a00000;
  stroke-width: 1.5;
}
.axis-label {
  fill: #f02828;
  font-size: 18px;
  text-anchor: end;
}
.chart-note {
  fill: #a8a8a8;
  font-size: 18px;
}
.tag {
  fill: #e8e8e8;
  font-size: 19px;
  letter-spacing: 2px;
}
.tag-value {
  fill: #e8e8e8;
  font-size: 18px;
}
.ind-wrap {
  position: relative;
  height: 517px;
  flex: none;
}

/* 输入法状态条 */
.ime {
  position: absolute;
  left: 0;
  top: 138px;
  display: flex;
  width: 157px;
  height: 25px;
  box-sizing: border-box;
  padding: 2px 2px;
  background: #d4d0c8;
  border: 1px solid #f8f8f8;
  border-right-color: #777;
  border-bottom-color: #777;
  color: #111;
  font-size: 17px;
  line-height: 19px;
}
.ime-key {
  display: block;
  width: 19px;
  border-right: 1px solid #777;
  border-left: 1px solid #fff;
  text-align: center;
  overflow: hidden;
}
.ime-a {
  color: #a00000;
  font-family: "Liberation Serif", serif;
  font-weight: 700;
}
.ime-name {
  width: 72px;
  white-space: nowrap;
}
.ime-kb {
  color: #777;
}

/* 时间轴 */
.time-axis {
  display: grid;
  grid-template-columns: 138px 181px 247px 248px 131px 116px 147px 258px 245px 76px;
  height: 23px;
  box-sizing: border-box;
  border-top: 2px solid #a00000;
  border-bottom: 2px solid #a00000;
  color: #f02828;
  line-height: 25px;
  font-size: 18px;
}
.time-axis span {
  padding-left: 2px;
  white-space: nowrap;
  overflow: hidden;
}
.time-axis span + span {
  border-left: 1px solid #a00000;
}
.time-axis .cursor {
  padding-left: 0;
  background: #000080;
  color: #c0c0c0;
  font-size: 17px;
  text-align: center;
}
.time-axis .label {
  color: #c0c0c0;
  text-align: center;
}

.btn-row {
  display: flex;
  box-sizing: border-box;
  border-bottom: 2px solid #a00000;
  white-space: nowrap;
}
.btn-row.first {
  height: 26px;
  line-height: 27px;
}
.btn-row.second {
  height: 27px;
  line-height: 31px;
}
.btn-row span {
  flex: none;
  box-sizing: border-box;
  border-right: 1px solid #a00000;
  text-align: center;
  overflow: hidden;
}

/* 右侧盘口 */
.panel {
  width: 336px;
  flex: none;
  box-sizing: border-box;
  border-left: 2px solid #a00000;
  overflow: hidden;
  font-size: 21px;
}
.name-row {
  display: flex;
  height: 43px;
  padding-left: 53px;
  align-items: center;
  gap: 10px;
}
.name {
  color: #00e0f0;
  font-size: 28px;
  font-weight: 700;
}
.code {
  margin-top: 4px;
  color: #a8a8a8;
  font-size: 20px;
  font-weight: 700;
  letter-spacing: 0.6px;
}
.price-row {
  display: grid;
  grid-template-columns: 122px 122px 1fr;
  height: 41px;
  box-sizing: border-box;
  padding: 0 7px 0 3px;
  border-bottom: 2px solid #a00000;
  color: #ff2828;
  font-size: 28px;
  font-weight: 700;
  line-height: 40px;
  letter-spacing: 1px;
}
.price-row span:last-child {
  text-align: right;
}
.change {
  display: flex;
  align-items: center;
}
.tri {
  width: 0;
  height: 0;
  margin-right: 1px;
  border-left: 11px solid transparent;
  border-right: 11px solid transparent;
  border-bottom: 20px solid #ff2828;
}
.book-row {
  display: grid;
  grid-template-columns: 162px 1fr;
  position: relative;
  height: 27px;
  box-sizing: border-box;
  padding: 2px 5px 0 2px;
  align-items: center;
  line-height: 25px;
}
.book-row .lbl {
  grid-column: 1;
  grid-row: 1;
}
.book-row .px {
  grid-column: 1;
  grid-row: 1;
  justify-self: end;
  color: #f53030;
}
.book-row .vol {
  grid-column: 2;
  grid-row: 1;
  justify-self: end;
  color: #c0c000;
}
.lbl {
  font-size: 23px;
  color: #bcbcbc;
}
.nowrap {
  white-space: nowrap;
}
.num {
  font-weight: 700;
  letter-spacing: 0.3px;
}
.num em {
  font-style: normal;
  font-size: 23px;
  font-weight: 300;
}
.book-split {
  height: 3px;
  box-sizing: border-box;
  border-bottom: 1px solid #3a78b0;
  position: relative;
}
.book-split::before {
  content: "";
  position: absolute;
  left: 0;
  bottom: -1px;
  width: 102px;
  height: 1px;
  background: #b8862a;
}
.stats {
  box-sizing: border-box;
  border-top: 2px solid #a00000;
}
.stats.first {
  margin-top: 2px;
  height: 146px;
  padding-top: 2px;
}
.stats.second {
  height: 93px;
  padding-top: 1px;
}
.stat-row {
  display: grid;
  grid-template-columns: 92px 70px 80px 1fr;
  height: 28.3px;
  padding: 0 5px 0 2px;
  align-items: center;
  line-height: 28px;
}
.stat-row .num {
  justify-self: end;
  white-space: nowrap;
}
.stat-row .num:nth-child(2) {
  grid-column: 2;
}
.stat-row .lbl:nth-child(3) {
  padding-left: 8px;
  letter-spacing: -0.4px;
}
.flows {
  height: 120px;
  box-sizing: border-box;
  padding-top: 1px;
  border-top: 2px solid #a00000;
}
.flow-row {
  display: grid;
  grid-template-columns: 138px 50px 81px 1fr;
  height: 28.4px;
  padding: 0 3px 0 2px;
  align-items: center;
  line-height: 28px;
}
.flow-row .num {
  justify-self: end;
}
.flow-row.up {
  color: #f53030;
}
.flow-row.dn {
  color: #00e000;
}
.flow-bar {
  display: flex;
  align-items: center;
}
.flow-bar i {
  display: block;
  height: 10px;
  background: currentColor;
}
.ticks {
  border-top: 2px solid #a00000;
}
.tick-row {
  display: grid;
  grid-template-columns: 60px 97px 94px 46px 1fr;
  height: 27px;
  padding: 0 5px 0 2px;
  align-items: center;
  line-height: 27px;
}
.tick-row .num {
  justify-self: end;
  white-space: nowrap;
}
.tick-row .num:first-child {
  justify-self: start;
}
.tick-row .side {
  justify-self: center;
  padding-left: 7px;
}

/* 右侧图标栏 */
.sidebar {
  display: flex;
  width: 37px;
  flex: none;
  flex-direction: column;
  align-items: center;
  background: #f0f0f0;
  color: #1f4fa8;
  font-size: 19px;
  font-weight: 400;
}
.side-item {
  display: flex;
  height: 34.5px;
  width: 100%;
  flex: none;
  align-items: center;
  justify-content: center;
}
.side-item.framed svg,
.side-item.framed span {
  box-sizing: border-box;
  width: 24px;
  height: 23px;
  border: 2px solid #4a90e2;
  background: #fff;
  line-height: 18px;
  text-align: center;
}
.side-item.txt span {
  font-size: 15px;
  letter-spacing: -1px;
}
.side-item.icon-auto span {
  color: #e86820;
  font-size: 15px;
  font-weight: 700;
}
.side-item.fx span {
  border-color: #40b0a0;
  border-radius: 6px;
  font-size: 11px;
  font-style: italic;
  font-weight: 700;
}
.side-item.rsi {
  color: #2040c0;
  font-size: 16px;
  font-weight: 700;
}
.side-item.dollar {
  color: #d02020;
  font-size: 24px;
  font-weight: 700;
  text-shadow: 1px 1px 0 #999;
}
.side-item.picked {
  box-sizing: border-box;
  border: 1px solid #fff;
  border-left-color: #bbb;
  border-top-color: #bbb;
  background: #f8f8f8;
  color: #1a48a8;
}
.side-sep {
  width: 30px;
  height: 2px;
  margin: 6px 0 5px;
  flex: none;
  background: #b0b0b0;
}

/* 底部行情 */
.ticker {
  display: flex;
  height: 37px;
  box-sizing: border-box;
  border-bottom: 2px solid #1c2c3c;
  background: #f6f6f6;
  color: #222;
  align-items: center;
}
.ticker-icon {
  display: block;
  width: 16px;
  height: 20px;
  margin: 0 4px 0 3px;
  box-sizing: border-box;
  border: 3px solid #f0b040;
  border-radius: 3px;
  background: #ffe080;
  flex: none;
}
.index {
  display: grid;
  grid-template-columns: 55px 101px 76px 88px 91px;
  flex: none;
  align-items: center;
  color: #f00000;
  font-size: 21px;
  font-weight: 700;
}
.idx-name {
  color: #222;
  font-size: 24px;
  font-weight: 300;
}
.idx-amt {
  color: #111;
}
.idx-amt em {
  font-style: normal;
  font-size: 24px;
  font-weight: 300;
}
.idx-total {
  height: 36px;
  padding-left: 6px;
  border-left: 1px solid #b0b0b0;
  font-size: 23px;
  letter-spacing: 1px;
  line-height: 36px;
  white-space: nowrap;
}

/* 水印 */
.watermark {
  position: absolute;
  left: 1360px;
  top: 1314px;
  display: flex;
  width: 800px;
  height: 81px;
  align-items: center;
  background: #7fa8d6;
}
.wm-cn {
  width: 306px;
  padding-left: 17px;
  box-sizing: border-box;
  color: #0c0c8c;
  font-size: 56px;
  font-weight: 900;
  white-space: nowrap;
}
.wm-logo {
  margin-left: 13px;
  flex: none;
}
.wm-mark {
  fill: #e8c84a;
  font-size: 50px;
  font-weight: 900;
}
.wm-url {
  margin-left: 27px;
  color: #fff;
  font-family: "Liberation Serif", serif;
  font-size: 62px;
  font-weight: 700;
  -webkit-text-stroke: 1.5px #fff;
  white-space: nowrap;
}
</style>
